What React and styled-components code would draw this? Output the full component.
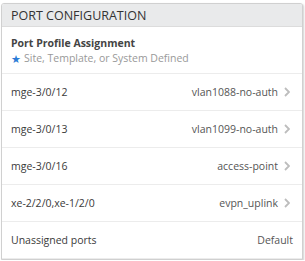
import styled, { createGlobalStyle } from 'styled-components'

const Global = createGlobalStyle`
    body {
        margin: 0;
        background: #ffffff;
        font-family: "Open Sans", "Liberation Sans", sans-serif;
    }
`

const Page = styled.div`
    padding: 3px 4px 0 1px;
`

const Card = styled.div`
    width: 300px;
    border: 1px solid #d0d0d0;
    border-radius: 3px 3px 0 0;
    box-shadow: 1px 1px 2px rgba(0,0,0,0.18);
    background: #fff;
    overflow: hidden;
`

const Header = styled.div`
    height: 22px;
    background: #e9eaeb;
    border-bottom: 1px solid #dcdcdc;
    display: flex;
    align-items: center;
    padding: 0 9px;
    font-size: 12.5px;
    color: #333;
`

const Intro = styled.div`
    padding: 9px 9px 7px;
    border-bottom: 1px solid #ececec;
`

const Title = styled.div`
    font-size: 10.5px;
    font-weight: 700;
    color: #444;
    line-height: 14px;
`

const Note = styled.div`
    display: flex;
    align-items: center;
    gap: 4px;
    font-size: 10.5px;
    color: #999;
    line-height: 14px;
`

const Star = styled.span`
    color: #2c7bd6;
    font-size: 11px;
    width: 9px;
    margin-top: 2px;
`

const Row = styled.div`
    height: 36px;
    display: flex;
    align-items: center;
    justify-content: space-between;
    padding: 0 ${p => (p.$arrow ? '12px' : '9px')} 0 9px;
    border-bottom: 1px solid #ececec;
    font-size: 10.5px;
    color: #3a3a3a;
`

const Value = styled.div`
    display: flex;
    align-items: center;
    gap: 6px;
    color: #555;
`

const Chevron = () => (
    <svg width="6" height="10" viewBox="0 0 6 10">
        <path d="M1 1 L5 5 L1 9" fill="none" stroke="#bdbdbd" strokeWidth="1.8" />
    </svg>
)

const rows = [
    ['mge-3/0/12', 'vlan1088-no-auth', true],
    ['mge-3/0/13', 'vlan1099-no-auth', true],
    ['mge-3/0/16', 'access-point', true],
    ['xe-2/2/0,xe-1/2/0', 'evpn_uplink', true],
    ['Unassigned ports', 'Default', false],
]

export default function App() {
    return (
        <Page>
            <Global />
            <Card>
                <Header>PORT CONFIGURATION</Header>
                <Intro>
                    <Title>Port Profile Assignment</Title>
                    <Note><Star>★</Star>Site, Template, or System Defined</Note>
                </Intro>
                {rows.map(([port, profile, arrow]) => (
                    <Row key={port} $arrow={arrow}>
                        <span>{port}</span>
                        <Value>
                            {profile}
                            {arrow && <Chevron />}
                        </Value>
                    </Row>
                ))}
            </Card>
        </Page>
    )
}
